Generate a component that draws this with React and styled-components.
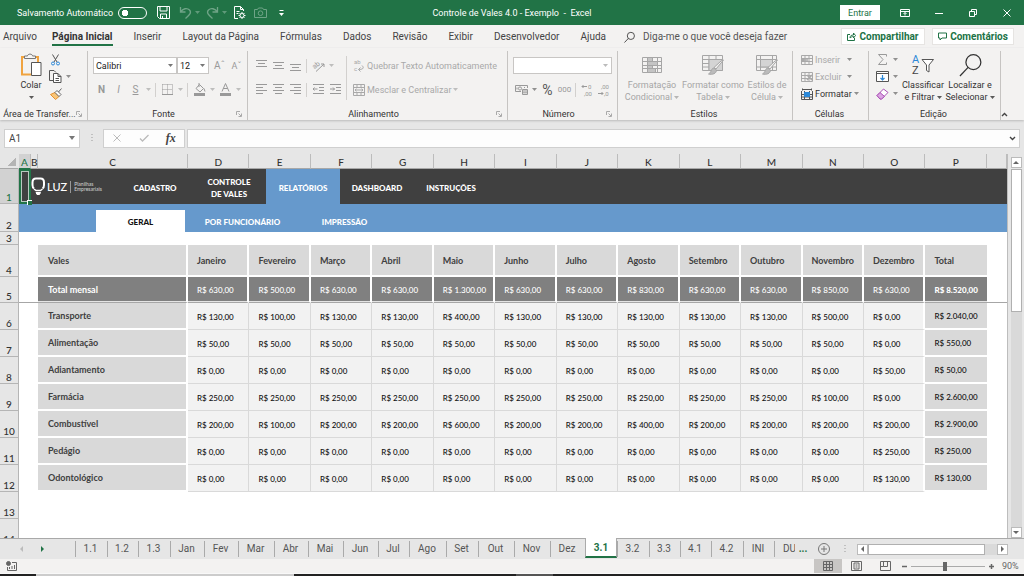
import React from "react";
import styled, { createGlobalStyle, css } from "styled-components";

const ui = '"Roboto", "Open Sans", "Noto Sans", sans-serif';
const cell = '"Lato", "Open Sans", sans-serif';

const Global = createGlobalStyle`
  *, *::before, *::after { box-sizing: border-box; }
  body { margin: 0; background: #e6e6e6; }
  button, input, select { font: inherit; color: inherit; margin: 0; }
  button { border: 0; background: none; padding: 0; cursor: default; }
`;

const Window = styled.div`
  display: flex;
  flex-direction: column;
  height: 100vh;
  overflow: hidden;
  font-family: ${ui};
  font-size: 9px;
  line-height: 12px;
  color: #444;
  background: #e6e6e6;
`;

/* ---------- title bar ---------- */
const TitleBar = styled.header`
  display: grid;
  grid-template-columns: 1fr auto 1fr;
  align-items: center;
  flex: none;
  height: 25px;
  background: #217346;
  color: #fff;
`;
const QuickAccess = styled.div`
  display: flex;
  align-items: center;
  padding-left: 17px;
`;
const AutoSave = styled.label`
  display: flex;
  align-items: center;
  gap: 5px;
  margin-right: 8px;
`;
const Toggle = styled.input`
  appearance: none;
  width: 29px;
  height: 12px;
  margin: 0;
  border: 1px solid #fff;
  border-radius: 6px;
  background: radial-gradient(circle at 6px 5px, #fff 3px, transparent 3px);
`;
const QuickButton = styled.button`
  display: grid;
  place-items: center;
  width: ${(p) => (p.$narrow ? 7 : 17)}px;
  margin-right: ${(p) => p.$gap || 0}px;
  height: 17px;
  opacity: ${(p) => (p.disabled ? 0.35 : 1)};
`;
const DocTitle = styled.h1`
  margin: 0;
  font-size: 9px;
  font-weight: 400;
  white-space: pre;
`;
const WindowControls = styled.div`
  display: flex;
  align-items: center;
  justify-content: flex-end;
`;
const SignIn = styled.button`
  width: 40px;
  height: 15px;
  margin-right: 8px;
  background: #fff;
  color: #217346;
`;
const WindowButton = styled.button`
  display: grid;
  place-items: center;
  width: 34px;
  height: 24px;
`;

/* ---------- ribbon tabs ---------- */
const TabStrip = styled.nav`
  display: flex;
  align-items: center;
  flex: none;
  height: 23px;
  padding: 0 10px 0 3px;
  background: #f3f2f1;
  font-size: 10px;
`;
const RibbonTabs = styled.div`
  display: flex;
  gap: 21px;
`;
const RibbonTab = styled.button`
  height: 19px;
  padding-top: 3px;
  border-bottom: 2px solid ${(p) => (p.$active ? "#217346" : "transparent")};
  font-weight: ${(p) => (p.$active ? 700 : 400)};
  color: ${(p) => (p.$active ? "#333" : "#444")};
  white-space: nowrap;
  &:first-child { margin-right: -6px; }
`;
const TellMe = styled.label`
  display: flex;
  align-items: center;
  flex: 1;
  gap: 8px;
  margin-left: 18px;
  padding-top: 1px;
`;
const TellMeInput = styled.input`
  flex: 1;
  min-width: 0;
  border: 0;
  padding: 0;
  background: none;
  &::placeholder { color: #555; opacity: 1; }
`;
const TopAction = styled.button`
  display: flex;
  align-items: center;
  justify-content: center;
  gap: 3px;
  width: ${(p) => p.$width}px;
  height: 17px;
  margin-left: 7px;
  border: 1px solid #e6e4e2;
  background: #fff;
  color: #217346;
  font-weight: 700;
`;

/* ---------- ribbon ---------- */
const Ribbon = styled.section`
  display: flex;
  flex: none;
  height: 72px;
  padding-top: 3px;
  background: #f3f2f1;
  box-shadow: 0 1px 2px #bbb;
  position: relative;
`;
const Group = styled.div`
  display: flex;
  flex-direction: column;
  flex: none;
  width: ${(p) => p.$width}px;
  border-right: 1px solid #c6c4c2;
`;
const GroupBody = styled.div`
  display: flex;
  flex: 1;
  padding-left: ${(p) => p.$left ?? 5}px;
`;
const GroupLabel = styled.div`
  display: flex;
  align-items: center;
  height: 12px;
  padding: 0 5px 0 3px;
  color: #333;
  span { flex: 1; text-align: center; white-space: nowrap; }
`;
const Rows = styled.div`
  display: flex;
  flex-direction: column;
  gap: ${(p) => (p.$dense ? 0 : 7)}px;
  padding-top: ${(p) => (p.$dense ? 0 : 6)}px;
`;
const Row = styled.div`
  display: flex;
  align-items: center;
  height: 17px;
`;
const Tool = styled.button`
  display: grid;
  place-items: center;
  flex: none;
  width: 17px;
  height: 17px;
  font-size: ${(p) => p.$size || 10}px;
  color: ${(p) => (p.$dim ? "#999" : "#555")};
`;
const CaretButton = styled.button`
  display: grid;
  place-items: center;
  flex: none;
  width: 9px;
  height: 17px;
  color: ${(p) => (p.$dim ? "#b0b0b0" : "#777")};
`;
const Divider = styled.span`
  flex: none;
  width: 1px;
  height: ${(p) => p.$height || 14}px;
  margin: ${(p) => p.$top || 0}px 3px 0 2px;
  background: #d2d0ce;
`;
const TextTool = styled.button`
  display: flex;
  align-items: center;
  height: 17px;
  min-width: 47px;
  color: ${(p) => (p.$dim ? "#a9a9a9" : "#333")};
  white-space: nowrap;
`;
const IconSlot = styled.span`
  display: grid;
  place-items: center;
  width: 17px;
  height: 17px;
`;
const BigTool = styled.button`
  display: flex;
  flex-direction: column;
  align-items: center;
  flex: none;
  width: ${(p) => p.$width}px;
  height: 54px;
  color: ${(p) => (p.$dim ? "#a6a6a6" : "#333")};
  white-space: nowrap;
`;
const BigIcon = styled.span`
  display: grid;
  place-items: center;
  height: 28px;
`;
const LabelLine = styled.span`
  display: flex;
  align-items: center;
  gap: 2px;
  height: 12px;
`;
const Picker = styled.select`
  appearance: none;
  width: ${(p) => p.$width}px;
  height: 17px;
  padding: 0 2px;
  border: 1px solid #c8c6c4;
  margin-right: ${(p) => p.$gap || 0}px;
  border-radius: 0;
  background: #fff url("data:image/svg+xml,%3Csvg xmlns='http://www.w3.org/2000/svg' width='5' height='3'%3E%3Cpath d='M0 0h5L2.500 3z' fill='${(p) => (p.$dim ? "%23bbb" : "%23777")}'/%3E%3C/svg%3E") no-repeat right 3px center;
  color: #222;
`;
const Collapse = styled.button`
  margin-left: auto;
  align-self: flex-end;
  width: 23px;
  height: 12px;
`;

/* ---------- formula bar ---------- */
const FormulaBar = styled.section`
  display: flex;
  align-items: center;
  flex: none;
  height: 34px;
  padding: 2px 4px 0;
  color: #444;
`;
const NameBox = styled.input`
  width: 76px;
  height: 19px;
  padding: 0 4px;
  border: 1px solid #cfcfcf;
  background: #fff url("data:image/svg+xml,%3Csvg xmlns='http://www.w3.org/2000/svg' width='6' height='4'%3E%3Cpath d='M0 0h6L3 4z' fill='%23777'/%3E%3C/svg%3E") no-repeat right 4px center;
  font-size: 10px;
`;
const Grip = styled.span`
  display: grid;
  place-items: center;
  width: ${(p) => p.$width}px;
`;
const FormulaButtons = styled.div`
  display: flex;
  align-items: center;
  width: 82px;
  height: 19px;
  border: 1px solid #cfcfcf;
  background: #fdfdfd;
  button { flex: 1; display: grid; place-items: center; }
`;
const Fx = styled.i`
  font-family: "Liberation Serif", serif;
  font-size: 12px;
  font-weight: 700;
`;
const FormulaField = styled.div`
  display: flex;
  align-items: center;
  flex: 1;
  height: 19px;
  margin-left: 2px;
  border: 1px solid #cfcfcf;
  background: #fdfdfd;
  input { flex: 1; min-width: 0; height: 100%; border: 0; background: none; }
  button { width: 13px; display: grid; place-items: center; }
`;

/* ---------- worksheet ---------- */
const SheetArea = styled.main`
  display: flex;
  flex: 1;
  min-height: 0;
`;
const SheetView = styled.div`
  flex: 1;
  min-width: 0;
  overflow: hidden;
  border-right: 1px solid #bdbdbd;
  background: #fff;
`;
const Sheet = styled.table`
  width: 100%;
  table-layout: fixed;
  border-collapse: separate;
  border-spacing: 0;
  font-family: ${cell};
  font-size: 8px;
  font-weight: 500;
  color: #111;
`;
const ColHead = styled.th`
  height: 15px;
  padding: 2px 0 0;
  background: #e6e6e6;
  border-right: 1px solid #bcbcbc;
  border-bottom: 1px solid #a8a8a8;
  font-size: 10px;
  line-height: 12px;
  font-weight: 500;
  color: #333;
  ${(p) => p.$selected && css`
    background: #d2d2d2;
    border-bottom-color: #217346;
    color: #217346;
  `}
  ${(p) => p.$corner && css`
    border-right-color: #e6e6e6;
    background: linear-gradient(135deg, #e6e6e6 50%, #b4b4b4 50%) no-repeat 8px 4px / 8px 8px, #e6e6e6;
  `}
`;
const RowHead = styled.th`
  height: ${(p) => p.$height}px;
  padding: 0;
  border-right: 1px solid #b5b5b5;
  border-bottom: 1px solid #b5b5b5;
  background: ${(p) => (p.$selected ? "#d2d2d2" : "#e6e6e6")};
  color: ${(p) => (p.$selected ? "#217346" : "#333")};
  font-size: 10px;
  font-weight: 500;
  line-height: 12px;
  vertical-align: bottom;
`;
const BlankCell = styled.td`
  padding: 0;
`;
const SelectedCell = styled.td`
  position: relative;
  z-index: 1;
  padding: 0;
  background: #404040;
  border: 2px solid #217346;
  box-shadow: inset 0 0 0 1px #b9c9c0;
  &::after {
    content: "";
    position: absolute;
    right: -3px;
    bottom: -3px;
    width: 5px;
    height: 5px;
    border: 1px solid #fff;
    border-width: 1px 0 0 1px;
    background: #217346;
  }
`;
const NavCell = styled.td`
  padding: 0;
  background: ${(p) => (p.$sub ? "#6699cc" : "#404040")};
  vertical-align: bottom;
`;
const SheetNav = styled.nav`
  display: flex;
  align-items: stretch;
  height: ${(p) => (p.$sub ? 22 : 35)}px;
  padding-left: ${(p) => (p.$sub ? 77 : 0)}px;
`;
const Brand = styled.div`
  display: flex;
  align-items: center;
  width: 87px;
  color: #fff;
`;
const BrandName = styled.span`
  margin: 0 3px 0 2px;
  font-size: 11px;
  font-weight: 500;
`;
const BrandTag = styled.small`
  padding: 1px 0 1px 3px;
  border-left: 1px solid #999;
  font-size: 5px;
  line-height: 5px;
  color: #ccc;
`;
const NavLink = styled.a`
  display: flex;
  align-items: center;
  justify-content: center;
  width: ${(p) => p.$width || 74}px;
  padding-top: 2px;
  background: ${(p) => p.$fill || "transparent"};
  color: ${(p) => (p.$fill === "#fff" ? "#111" : "#fff")};
  font-size: 8px;
  font-weight: 900;
  line-height: 12px;
  text-align: center;
  text-decoration: none;
`;
const LabelCell = styled.th`
  padding: 1px 0 0 10px;
  border-right: 2px solid #fff;
  border-bottom: 2px solid #fff;
  background: #d9d9d9;
  color: #404040;
  font-size: 9px;
  font-weight: 700;
  text-align: left;
`;
const MonthCell = styled(LabelCell)`
  padding-left: 9px;
  &:nth-last-child(2) { border-right: 0; }
`;
const totalRow = css`
  border-right: 2px solid #fff;
  border-bottom: 1px solid #a6a6a6;
  background: #808080;
  box-shadow: inset 0 -1px 0 #e4e4e4;
  color: #fff;
`;
const TotalCell = styled.td`
  ${totalRow}
  padding: 0 0 0 9px;
  font-weight: ${(p) => (p.$strong ? 900 : 500)};
  ${(p) => p.$strong && "border-right: 0;"}
`;
const TotalLabel = styled(LabelCell)`
  ${totalRow}
  padding-top: 0;
`;
const FreezeLine = styled.td`
  padding: 0;
  border-bottom: 1px solid #a6a6a6;
`;
const ValueCell = styled.td`
  padding: 1px 0 0 9px;
  border-right: ${(p) => (p.$last ? "2px solid #fff" : "1px solid #d9d9d9")};
  border-bottom: 1px solid #d9d9d9;
  background: #f2f2f2;
`;
const SumCell = styled.td`
  padding: 1px 0 0 9px;
  border-bottom: 2px solid #fff;
  background: #d9d9d9;
`;
const VScroll = styled.div`
  display: flex;
  flex-direction: column;
  align-items: center;
  flex: none;
  width: 16px;
  padding-top: 3px;
`;
const ScrollButton = styled.button`
  display: grid;
  place-items: center;
  flex: none;
  width: 11px;
  height: 11px;
  border: 1px solid #bbb;
  background: #fff;
  color: #666;
`;
const VTrack = styled.div`
  flex: 1;
  width: 11px;
  margin-top: 1px;
  background: #d9d9d9;
`;
const VThumb = styled.div`
  width: 11px;
  height: 40%;
  border: 1px solid #b0b0b0;
  background: #fff;
`;

/* ---------- sheet tabs ---------- */
const SheetTabs = styled.nav`
  display: flex;
  flex: none;
  height: 21px;
  border-top: 1px solid #a9a9a9;
  background: #e6e6e6;
  font-size: 10px;
  color: #555;
`;
const TabArrows = styled.div`
  display: flex;
  align-items: center;
  justify-content: space-between;
  width: 75px;
  padding: 0 29px 0 19px;
`;
const SheetTab = styled.button`
  flex: none;
  align-self: center;
  width: ${(p) => p.$width}px;
  height: 16px;
  padding-right: 2px;
  border-left: 1px solid #aaa;
  text-align: center;
  white-space: nowrap;
  overflow: hidden;
  ${(p) => p.$clipped && css`
    padding: 0 0 0 8px;
    text-align: left;
  `}
  ${(p) => p.$active && css`
    height: 20px;
    align-self: flex-start;
    margin-top: -1px;
    padding: 2px 0 0;
    border-right: 1px solid #aaa;
    border-bottom: 2px solid #217346;
    background: #fff;
    color: #217346;
    font-weight: 700;
  `}
`;
const MoreTabs = styled.span`
  width: 16px;
  align-self: center;
  text-align: center;
  color: #217346;
  font-weight: 700;
`;
const AddSheet = styled.button`
  display: grid;
  place-items: center;
  width: 26px;
  color: #777;
`;
const HScroll = styled.div`
  display: flex;
  align-items: center;
  flex: 1;
  padding: 0 16px 0 4px;
`;
const HTrack = styled.div`
  flex: 1;
  height: 11px;
  background: #dadada;
`;
const HThumb = styled.div`
  width: 91%;
  height: 11px;
  border: 1px solid #b0b0b0;
  background: #fff;
`;

/* ---------- status bar ---------- */
const StatusBar = styled.footer`
  display: flex;
  align-items: center;
  flex: none;
  height: 14px;
  padding-left: 6px;
  background: #f3f2f1;
  color: #666;
`;
const Views = styled.div`
  display: flex;
  margin-left: auto;
`;
const ViewButton = styled.button`
  display: grid;
  place-items: center;
  width: ${(p) => (p.$active ? 28 : 29)}px;
  height: 14px;
  background: ${(p) => (p.$active ? "#c8c6c4" : "transparent")};
`;
const Zoom = styled.div`
  display: flex;
  align-items: center;
  gap: 2px;
  width: 124px;
  button { width: 9px; height: 12px; display: grid; place-items: center; }
`;
const ZoomRange = styled.input`
  appearance: none;
  width: 74px;
  height: 12px;
  margin: 0;
  background: linear-gradient(#aaa, #aaa) no-repeat center / 100% 1px;
  &::-webkit-slider-thumb {
    appearance: none;
    width: 4px;
    height: 9px;
    background: #666;
  }
`;
const ZoomValue = styled.span`
  margin-left: 4px;
`;
const Taskbar = styled.div`
  flex: none;
  height: 3px;
  border-top: 1px solid #f8f8f8;
  background: linear-gradient(90deg, #222 0 3.5%, #ccc 3.5% 28.7%, #222 28.7% 50.4%, #555 50.4% 54%, #222 54%);
`;

/* ---------- icons ---------- */
const Drawing = styled.svg`
  display: block;
  overflow: visible;
`;
const Svg = ({ w = 14, h = w, vb, children, sw = 1 }) => (
  <Drawing width={w} height={h} viewBox={vb || `0 0 ${w} ${h}`} fill="none" stroke="currentColor" strokeWidth={sw} aria-hidden="true">
    {children}
  </Drawing>
);
const Caret = () => (
  <Svg w={5} h={3}><path d="M0 0h5L2.500 3z" fill="currentColor" stroke="none" opacity=".8" /></Svg>
);
const Tri = ({ dir }) => {
  const d = { up: "M0 4h6L3 1z", down: "M0 1h6L3 4z", left: "M4 0v6L1 3z", right: "M1 0v6l3-3z" }[dir];
  return <Svg w={6} h={6}><path d={d} fill="currentColor" stroke="none" /></Svg>;
};
const SaveIcon = () => (
  <Svg w={13}><path d="M.5.500h12v12H2.500l-2-2zM3 .500v4.500h7V.500M3.500 12.500V8h6v4.500M5.500 10v2.500" /></Svg>
);
const UndoIcon = ({ flip }) => (
  <Svg w={13} sw={1.300}>
    <g transform={flip ? "translate(13 0) scale(-1 1)" : undefined}>
      <path d="M1.500 1v5h5M1.500 6C4 2.500 8 1.500 10.500 4s0 5-4 8.500" />
    </g>
  </Svg>
);
const DocIcon = () => (
  <Svg w={12} h={13}>
    <path d="M9.500 5V3.500L6.500.500H.5v12H4M6.500.500v3h3M2.500 5.500h3M2.500 7.500h2" />
    <circle cx="8" cy="9.500" r="2" />
    <path d="M8 6v1.500M8 11.500V13M4.500 9.500H6M10 9.500h1.500M5.500 7l1 1M9.500 11l1 1M10.500 7l-1 1M6.500 11l-1 1" />
  </Svg>
);
const CameraIcon = () => (
  <Svg w={13} h={11}><path d="M.5 2.500h3l1-1.500h4l1 1.500h3v8H.5z" /><circle cx="6.500" cy="6.200" r="2.300" /></Svg>
);
const CustomizeIcon = () => (
  <Svg w={5} h={6}><path d="M.5.500h4" /><path d="M0 3h5L2.500 6z" fill="currentColor" stroke="none" /></Svg>
);
const RibbonOptionsIcon = () => (
  <Svg w={10} h={8}><path d="M.5.500h9v7h-9zM.5 2.500h9M5 6.500V3.500M3.500 5L5 3.500 6.500 5" /></Svg>
);
const RestoreIcon = () => (
  <Svg w={8}><path d="M.5 2.500h5v5h-5zM2.500 2V.500h5v5H6" /></Svg>
);
const CloseIcon = () => (
  <Svg w={8}><path d="M.5.500l7 7M7.500.500l-7 7" /></Svg>
);
const SearchIcon = ({ s = 11 }) => (
  <Svg w={s} vb="0 0 24 24" sw={s > 15 ? 1.300 : 2}><circle cx="15" cy="8.500" r="7.800" /><path d="M9.500 14L1 23" /></Svg>
);
const ShareIcon = () => (
  <Svg w={9}><path d="M3 2.500H.5v6h7V6M3 6c0-2 1-3 3.500-3V1l2 2.500-2 2.500V4.500C5 4.500 4 5 3 6z" /></Svg>
);
const CommentIcon = () => (
  <Svg w={9}><path d="M.5 1h8v5H4L2 8V6H.5z" /></Svg>
);
const PasteIcon = () => (
  <Svg w={22} h={24}>
    <path d="M5 4H2v17.500h9M15 4h3v5" stroke="#f0a33f" strokeWidth="2" />
    <path d="M4.500 5.500V3h3C7.500.500 12.500.500 12.500 3h3v2.500z" fill="#f6f6f6" stroke="#777" />
    <path d="M11.500 9.500h9.500v13h-9.500z" fill="#fff" stroke="#555" />
  </Svg>
);
const CutIcon = () => (
  <Svg w={9} h={12}><path d="M1.500.500L6 8M7.500.500L3 8" stroke="#555" /><circle cx="2" cy="9.500" r="1.500" stroke="#2b88d8" /><circle cx="7" cy="9.500" r="1.500" stroke="#2b88d8" /></Svg>
);
const CopyIcon = () => (
  <Svg w={13} h={13}><path d="M4 10.500H.5V.500H5L7 2.500" /><path d="M4.500 3.500H9l3 3v6H4.500zM9 3.500v3h3M6.500 8.500h3.500M6.500 10.500h3.500" fill="#fff" /></Svg>
);
const BrushIcon = () => (
  <Svg w={12} h={12}><path d="M.5 6.500L5 4.500l4 4-3.500 3z" fill="#f8c67a" stroke="#e8912d" /><path d="M5 4.500l2-2 4 4-2 2zM8.500 4L11.500.500" fill="#fff" stroke="#666" /></Svg>
);
const LinesIcon = ({ rows }) => (
  <Svg w={11} h={11}>{rows.map(([x, y, w]) => <path key={y} d={`M${x} ${y}.500h${w}`} />)}</Svg>
);
const OrientIcon = () => (
  <Svg w={14} h={13}>
    <text x="1" y="8" fontSize="7" fill="currentColor" stroke="none" transform="rotate(-40 5 7)">ab</text>
    <path d="M4 12.500L12 5M9 5h3v3" />
  </Svg>
);
const IndentIcon = ({ right }) => (
  <Svg w={11} h={11}><path d={`M0 .500h11M6 3.500h5M6 6.500h5M0 9.500h11M0 5h4.500${right ? "M3 3.500L4.500 5 3 6.500" : "M1.500 3.500L0 5l1.500 1.500"}`} /></Svg>
);
const BordersIcon = () => (
  <Svg w={11} h={11}><path d="M.5.500h10v10M.5.500v10M5.500.500v10M.5 5.500h10" strokeDasharray="1 1" /><path d="M0 10.500h11" /></Svg>
);
const FillIcon = () => (
  <Svg w={13} h={13}><path d="M3 5.500L6.500 1.500l4 4L7 9zM6 0v4M11 5.500l1 3" /><path d="M1 10h11v3H1z" fill="currentColor" stroke="none" /></Svg>
);
const FontColorIcon = () => (
  <Svg w={13} h={13}><path d="M3 8.500L6.500.500 10 8.500M4.300 5.500h4.400" /><path d="M1 10h11v3H1z" fill="currentColor" stroke="none" /></Svg>
);
const WrapIcon = () => (
  <Svg w={12} h={13}>
    <text x="1" y="5" fontSize="6" fill="currentColor" stroke="none">ab</text>
    <text x="1" y="12" fontSize="6" fill="currentColor" stroke="none">c</text>
    <path d="M9 6.500c3 3 0 4-3.500 4M7.500 8.500l-2 2 2 2" />
  </Svg>
);
const MergeIcon = () => (
  <Svg w={12} h={12}><path d="M.5.500h11v11H.5zM.5 3.500h11M.5 8.500h11M4 .500v3M8 .500v3M4 8.500v3M8 8.500v3M2 6h8M3.500 4.700L2 6l1.500 1.300M8.500 4.700L10 6 8.500 7.300" /></Svg>
);
const MoneyIcon = () => (
  <Svg w={13} h={11}><path d="M6 7.500H.5v-6h12V4" /><circle cx="5" cy="4.500" r="1.600" /><path d="M7.500 5.500h5v5h-5zM7.500 7h5M7.500 8.800h5M2 3.500v2M9.500 3v1" /></Svg>
);
const DecimalIcon = ({ less }) => (
  <Svg w={13} h={13}>
    <text x={less ? 3 : 7} y="6" fontSize="6" fill="currentColor" stroke="none">{less ? ",00" : "0"}</text>
    <text x={less ? 6 : 3} y="13" fontSize="6" fill="currentColor" stroke="none">{less ? ",0" : ",00"}</text>
    <path d={less ? "M0 10.500h5M3.500 9L5 10.500 3.500 12" : "M1 3.500h5M2.500 2L1 3.500 2.500 5"} />
  </Svg>
);
const CondIcon = () => (
  <Svg w={22} h={18}>
    <path d="M1.500 1.500h19v15h-19zM1.500 5.500h19M1.500 9.500h19M1.500 12.500h19M6.500 1.500v15M11.500 1.500v15M16.500 1.500v15" />
    <path d="M6.500 1.500h5v4h-5zM6.500 5.500h10v4h-10zM6.500 9.500h5v3h-5zM6.500 12.500h8v4h-8z" fill="#c4c4c4" />
  </Svg>
);
const TableStyleIcon = ({ cell: single }) => (
  <Svg w={24} h={22}>
    <path d={single ? "M1.500 1.500h20v15h-20zM1.500 5.500h20M5.500 1.500v15M17.500 1.500v15M1.500 13h20" : "M1.500 1.500h20v15h-20zM1.500 5.500h20M1.500 9.500h20M1.500 13h20M8 1.500v15M15 1.500v15"} />
    <path d={single ? "M5.500 5.500h12V13h-12z" : "M8 5.500h13.500v11H8z"} fill="#d4d4d4" />
    <path d="M22.500 6L15 15l-2-1.500L20 7z" fill="#f3f2f1" />
    <path d="M13 14c-3 0-2 4-5.500 6 4 1 8-.500 8-4z" fill="#bbb" />
  </Svg>
);
const CellsIcon = ({ kind }) => (
  <Svg w={12} h={12}>
    {kind === "format" ? (
      <>
        <path d="M.5 3v8.500h11V3M.5 6.500h11M.5 9h11M3.500 3v8.500M8.500 3v8.500M1.500.500v2M10.500.500v2M1.500 1.500h9" stroke="#555" />
        <path d="M3.500 4.500h5v4h-5z" fill="#2b88d8" stroke="#2b88d8" />
      </>
    ) : (
      <>
        <path d="M.5 1.500h11v9H.5zM.5 4.500h11M.5 7.500h11M4 1.500v9M8 1.500v9" />
        {kind === "insert" ? <path d="M1 6h6M3 4.500L1 6l2 1.500" strokeWidth="1.500" /> : <path d="M6 4l5 5M11 4L6 9" strokeWidth="1.500" />}
      </>
    )}
  </Svg>
);
const SigmaIcon = () => (
  <Svg w={11} h={11}><path d="M9.500 2.500V.500h-8L6 5.500l-4.500 5h8v-2" stroke="#999" /></Svg>
);
const FillDownIcon = () => (
  <Svg w={13} h={11}><path d="M.5.500h12v10H.5zM.5 2.500h12" fill="#fff" stroke="#555" /><path d="M6.500 4v5M4.500 7l2 2 2-2" stroke="#2b88d8" strokeWidth="1.200" /></Svg>
);
const EraserIcon = () => (
  <Svg w={13} h={12}><path d="M1 7.500L7.500 1 12 4.500 5.500 11H4z" fill="#fff" stroke="#a94fb5" /><path d="M1 7.500L4 4.500l4.500 4L5.500 11H4z" fill="#dba6e2" stroke="#a94fb5" /></Svg>
);
const SortFilterIcon = () => (
  <Svg w={24} h={22}>
    <text x="1" y="9" fontSize="11" fill="#2b88d8" stroke="none">A</text>
    <text x="1" y="20" fontSize="11" fill="#444" stroke="none">Z</text>
    <path d="M11 5.500h11.500L18 11v7l-2.500-1.500V11z" fill="#fff" stroke="#555" />
  </Svg>
);
const LauncherIcon = () => (
  <Svg w={6} h={6}><path d="M.5 4V.500H4M2.500 2.500L5 5M5.500 2.500v3h-3" stroke="#aaa" /></Svg>
);
const BulbIcon = () => (
  <Svg w={14} h={19} sw={2}>
    <path d="M3 11.500Q1.500 10.500 1.500 8V5.500Q1.500 1.500 5 1.500h4.500Q13 1.500 13 5.500V8q0 2.500-1.500 3.500" stroke="#fff" />
    <path d="M3 12l2 1.500h4.500l2-1.500" stroke="#fff" strokeWidth="1.500" />
    <path d="M5 15.500h4.500L8.500 17.500H6z" fill="#fff" stroke="#fff" strokeWidth="1" />
  </Svg>
);

/* ---------- data ---------- */
const ribbonTabs = ["Arquivo", "Página Inicial", "Inserir", "Layout da Página", "Fórmulas", "Dados", "Revisão", "Exibir", "Desenvolvedor", "Ajuda"];
const months = ["Janeiro", "Fevereiro", "Março", "Abril", "Maio", "Junho", "Julho", "Agosto", "Setembro", "Outubro", "Novembro", "Dezembro", "Total"];
const columns = "ABCDEFGHIJKLMNOP".split("");
const totals = ["630,00", "500,00", "630,00", "630,00", "1.300,00", "630,00", "630,00", "830,00", "630,00", "630,00", "850,00", "630,00", "8.520,00"];
const rows = [
  ["Transporte", "130,00", "100,00", "130,00", "130,00", "400,00", "130,00", "130,00", "130,00", "130,00", "130,00", "500,00", "0,00", "2.040,00"],
  ["Alimentação", "50,00", "50,00", "50,00", "50,00", "50,00", "50,00", "50,00", "50,00", "50,00", "50,00", "50,00", "0,00", "550,00"],
  ["Adiantamento", "0,00", "0,00", "0,00", "0,00", "0,00", "0,00", "0,00", "0,00", "0,00", "0,00", "0,00", "50,00", "50,00"],
  ["Farmácia", "250,00", "250,00", "250,00", "250,00", "250,00", "250,00", "250,00", "250,00", "250,00", "250,00", "100,00", "0,00", "2.600,00"],
  ["Combustível", "200,00", "100,00", "200,00", "200,00", "600,00", "200,00", "200,00", "400,00", "200,00", "200,00", "200,00", "200,00", "2.900,00"],
  ["Pedágio", "0,00", "0,00", "0,00", "0,00", "0,00", "0,00", "0,00", "0,00", "0,00", "0,00", "0,00", "250,00", "250,00"],
  ["Odontológico", "0,00", "0,00", "0,00", "0,00", "0,00", "0,00", "0,00", "0,00", "0,00", "0,00", "0,00", "130,00", "130,00"],
];
const sheetTabs = [
  ["1.1", 32], ["1.2", 31], ["1.3", 32], ["Jan", 34], ["Fev", 34], ["Mar", 36], ["Abr", 34], ["Mai", 35], ["Jun", 35], ["Jul", 31],
  ["Ago", 37], ["Set", 32], ["Out", 36], ["Nov", 36], ["Dez", 35], ["3.1", 32], ["3.2", 32], ["3.3", 31], ["4.1", 31], ["4.2", 32], ["INI", 31], ["DU", 21],
];

const RibbonGroup = ({ width, label, left, launcher, children }) => (
  <Group $width={width}>
    <GroupBody $left={left}>{children}</GroupBody>
    <GroupLabel><span>{label}</span>{launcher && <LauncherIcon />}</GroupLabel>
  </Group>
);
const DropCaret = ({ dim, label }) => <CaretButton $dim={dim} aria-label={label}><Caret /></CaretButton>;

export default function App() {
  return (
    <Window>
      <Global />
      <TitleBar>
        <QuickAccess>
          <AutoSave>Salvamento Automático<Toggle type="checkbox" role="switch" /></AutoSave>
          <QuickButton $gap={5} aria-label="Salvar"><SaveIcon /></QuickButton>
          <QuickButton disabled aria-label="Desfazer"><UndoIcon /></QuickButton>
          <QuickButton $narrow $gap={3} disabled aria-label="Opções de desfazer"><Caret /></QuickButton>
          <QuickButton disabled aria-label="Refazer"><UndoIcon flip /></QuickButton>
          <QuickButton $narrow $gap={3} disabled aria-label="Opções de refazer"><Caret /></QuickButton>
          <QuickButton $gap={4} aria-label="Visualizar impressão"><DocIcon /></QuickButton>
          <QuickButton $gap={9} disabled aria-label="Câmera"><CameraIcon /></QuickButton>
          <QuickButton $narrow aria-label="Personalizar"><CustomizeIcon /></QuickButton>
        </QuickAccess>
        <DocTitle>{"Controle de Vales 4.0 - Exemplo  -  Excel"}</DocTitle>
        <WindowControls>
          <SignIn>Entrar</SignIn>
          <WindowButton aria-label="Opções da faixa"><RibbonOptionsIcon /></WindowButton>
          <WindowButton aria-label="Minimizar"><Svg w={8}><path d="M0 4.500h8" /></Svg></WindowButton>
          <WindowButton aria-label="Restaurar"><RestoreIcon /></WindowButton>
          <WindowButton aria-label="Fechar"><CloseIcon /></WindowButton>
        </WindowControls>
      </TitleBar>

      <TabStrip>
        <RibbonTabs>
          {ribbonTabs.map((t) => <RibbonTab key={t} $active={t === "Página Inicial"}>{t}</RibbonTab>)}
        </RibbonTabs>
        <TellMe><SearchIcon /><TellMeInput aria-label="Pesquisar" placeholder="Diga-me o que você deseja fazer" /></TellMe>
        <TopAction $width={84}><ShareIcon />Compartilhar</TopAction>
        <TopAction $width={82}><CommentIcon />Comentários</TopAction>
      </TabStrip>

      <Ribbon>
        <RibbonGroup width={88} label="Área de Transfer..." left={15} launcher>
          <BigTool $width={32}>
            <BigIcon><PasteIcon /></BigIcon>
            <LabelLine>Colar</LabelLine>
            <LabelLine><Caret /></LabelLine>
          </BigTool>
          <Rows $dense>
            <Row><Tool aria-label="Recortar"><CutIcon /></Tool></Row>
            <Row><Tool aria-label="Copiar"><CopyIcon /></Tool><DropCaret label="Opções de copiar" /></Row>
            <Row><Tool aria-label="Pincel"><BrushIcon /></Tool></Row>
          </Rows>
        </RibbonGroup>

        <RibbonGroup width={160} label="Fonte" launcher>
          <Rows>
            <Row>
              <Picker $width={84} aria-label="Fonte"><option>Calibri</option></Picker>
              <Picker $width={32} $gap={2} aria-label="Tamanho"><option>12</option></Picker>
              <Tool $dim aria-label="Aumentar fonte"><span>Aˆ</span></Tool>
              <Tool $dim $size={9} aria-label="Diminuir fonte"><span>Aˇ</span></Tool>
            </Row>
            <Row>
              <Tool $dim><b>N</b></Tool>
              <Tool $dim><i>I</i></Tool>
              <Tool $dim><u>S</u></Tool>
              <DropCaret dim label="Sublinhado" />
              <Divider />
              <Tool $dim aria-label="Bordas"><BordersIcon /></Tool>
              <DropCaret dim label="Opções de bordas" />
              <Divider />
              <Tool $dim aria-label="Preenchimento"><FillIcon /></Tool>
              <DropCaret dim label="Cores de preenchimento" />
              <Tool $dim aria-label="Cor da fonte"><FontColorIcon /></Tool>
              <DropCaret dim label="Cores da fonte" />
            </Row>
          </Rows>
        </RibbonGroup>

        <RibbonGroup width={260} label="Alinhamento" launcher>
          <Rows>
            <Row>
              <Tool $dim aria-label="Alinhar acima"><LinesIcon rows={[[0, 0, 11], [2, 3, 7], [0, 6, 11]]} /></Tool>
              <Tool $dim aria-label="Alinhar no meio"><LinesIcon rows={[[0, 2, 11], [2, 5, 7], [0, 8, 11]]} /></Tool>
              <Tool $dim aria-label="Alinhar abaixo"><LinesIcon rows={[[0, 4, 11], [2, 7, 7], [0, 10, 11]]} /></Tool>
              <Divider />
              <Tool $dim aria-label="Orientação"><OrientIcon /></Tool>
              <DropCaret dim label="Opções de orientação" />
            </Row>
            <Row>
              <Tool $dim aria-label="Alinhar à esquerda"><LinesIcon rows={[[0, 0, 11], [0, 3, 7], [0, 6, 11], [0, 9, 7]]} /></Tool>
              <Tool $dim aria-label="Centralizar"><LinesIcon rows={[[0, 0, 11], [2, 3, 7], [0, 6, 11], [2, 9, 7]]} /></Tool>
              <Tool $dim aria-label="Alinhar à direita"><LinesIcon rows={[[0, 0, 11], [4, 3, 7], [0, 6, 11], [4, 9, 7]]} /></Tool>
              <Divider />
              <Tool $dim aria-label="Diminuir recuo"><IndentIcon /></Tool>
              <Tool $dim aria-label="Aumentar recuo"><IndentIcon right /></Tool>
            </Row>
          </Rows>
          <Divider $height={44} $top={5} />
          <Rows>
            <TextTool $dim><IconSlot><WrapIcon /></IconSlot>Quebrar Texto Automaticamente</TextTool>
            <Row>
              <TextTool $dim><IconSlot><MergeIcon /></IconSlot>Mesclar e Centralizar</TextTool>
              <DropCaret dim label="Opções de mesclar" />
            </Row>
          </Rows>
        </RibbonGroup>

        <RibbonGroup width={110} label="Número" launcher>
          <Rows>
            <Picker $width={99} $dim aria-label="Formato de número"><option> </option></Picker>
            <Row>
              <Tool $dim aria-label="Contábil"><MoneyIcon /></Tool>
              <DropCaret label="Formatos contábeis" />
              <Tool $size={14}>%</Tool>
              <Tool $dim $size={8}>000</Tool>
              <Divider />
              <Tool $dim aria-label="Aumentar casas decimais"><DecimalIcon /></Tool>
              <Tool $dim aria-label="Diminuir casas decimais"><DecimalIcon less /></Tool>
            </Row>
          </Rows>
        </RibbonGroup>

        <RibbonGroup width={175} label="Estilos" left={4}>
          <BigTool $width={60} $dim>
            <BigIcon><CondIcon /></BigIcon>
            <LabelLine>Formatação</LabelLine><LabelLine>Condicional<Caret /></LabelLine>
          </BigTool>
          <BigTool $width={62} $dim>
            <BigIcon><TableStyleIcon /></BigIcon>
            <LabelLine>Formatar como</LabelLine><LabelLine>Tabela<Caret /></LabelLine>
          </BigTool>
          <BigTool $width={46} $dim>
            <BigIcon><TableStyleIcon cell /></BigIcon>
            <LabelLine>Estilos de</LabelLine><LabelLine>Célula<Caret /></LabelLine>
          </BigTool>
        </RibbonGroup>

        <RibbonGroup width={76} label="Células">
          <Rows $dense>
            <Row><TextTool $dim><IconSlot><CellsIcon kind="insert" /></IconSlot>Inserir</TextTool><DropCaret label="Opções de inserir" /></Row>
            <Row><TextTool $dim><IconSlot><CellsIcon kind="delete" /></IconSlot>Excluir</TextTool><DropCaret label="Opções de excluir" /></Row>
            <Row><TextTool><IconSlot><CellsIcon kind="format" /></IconSlot>Formatar</TextTool><DropCaret label="Opções de formatar" /></Row>
          </Rows>
        </RibbonGroup>

        <RibbonGroup width={132} label="Edição">
          <Rows $dense>
            <Row><Tool aria-label="Soma"><SigmaIcon /></Tool><DropCaret label="Funções" /></Row>
            <Row><Tool aria-label="Preencher"><FillDownIcon /></Tool><DropCaret label="Opções de preencher" /></Row>
            <Row><Tool aria-label="Limpar"><EraserIcon /></Tool><DropCaret label="Opções de limpar" /></Row>
          </Rows>
          <BigTool $width={46}>
            <BigIcon><SortFilterIcon /></BigIcon>
            <LabelLine>Classificar</LabelLine><LabelLine>e Filtrar<Caret /></LabelLine>
          </BigTool>
          <BigTool $width={48}>
            <BigIcon><SearchIcon s={23} /></BigIcon>
            <LabelLine>Localizar e</LabelLine><LabelLine>Selecionar<Caret /></LabelLine>
          </BigTool>
        </RibbonGroup>
        <Collapse aria-label="Recolher faixa"><Svg w={7} h={5}><path d="M1 4l2.500-2.500L6 4" strokeWidth="1.400" /></Svg></Collapse>
      </Ribbon>

      <FormulaBar>
        <NameBox aria-label="Caixa de nome" defaultValue="A1" />
        <Grip $width={23}><Svg w={2} h={9}><path d="M1 0v9" strokeDasharray="1 2" stroke="#999" /></Svg></Grip>
        <FormulaButtons>
          <button aria-label="Cancelar"><Svg w={8}><path d="M.5.500l7 7M7.500.500l-7 7" stroke="#bbb" /></Svg></button>
          <button aria-label="Inserir"><Svg w={10} h={8}><path d="M1 4.500L3.500 7 9.500 1" stroke="#bbb" strokeWidth="1.300" /></Svg></button>
          <button aria-label="Inserir função"><Fx>fx</Fx></button>
        </FormulaButtons>
        <FormulaField>
          <input aria-label="Barra de fórmulas" />
          <button aria-label="Expandir"><Svg w={7} h={5}><path d="M1 1l2.500 2.500L6 1" strokeWidth="1.400" /></Svg></button>
        </FormulaField>
      </FormulaBar>

      <SheetArea>
        <SheetView>
          <Sheet>
            <colgroup>
              <col width="19" /><col width="12" /><col width="7" /><col width="150" />
              {months.map((m) => <col key={m} />)}
              <col width="20" />
            </colgroup>
            <thead>
              <tr>
                <ColHead $corner />
                {columns.map((c) => <ColHead key={c} scope="col" $selected={c === "A"}>{c}</ColHead>)}
                <ColHead />
              </tr>
            </thead>
            <tbody>
              <tr>
                <RowHead $height={35} $selected>1</RowHead>
                <SelectedCell />
                <NavCell colSpan={16}>
                  <SheetNav>
                    <Brand><BulbIcon /><BrandName>LUZ</BrandName><BrandTag>Planilhas<br />Empresariais</BrandTag></Brand>
                    <NavLink href="#cadastro">CADASTRO</NavLink>
                    <NavLink href="#controle">CONTROLE<br />DE VALES</NavLink>
                    <NavLink href="#relatorios" $fill="#6699cc">RELATÓRIOS</NavLink>
                    <NavLink href="#dashboard">DASHBOARD</NavLink>
                    <NavLink href="#instrucoes">INSTRUÇÕES</NavLink>
                  </SheetNav>
                </NavCell>
              </tr>
              <tr>
                <RowHead $height={28}>2</RowHead>
                <NavCell $sub colSpan={17}>
                  <SheetNav $sub>
                    <NavLink href="#geral" $width={89} $fill="#fff">GERAL</NavLink>
                    <NavLink href="#funcionario" $width={115}>POR FUNCIONÁRIO</NavLink>
                    <NavLink href="#impressao" $width={89}>IMPRESSÃO</NavLink>
                  </SheetNav>
                </NavCell>
              </tr>
              <tr><RowHead $height={13}>3</RowHead><BlankCell colSpan={17} /></tr>
              <tr>
                <RowHead $height={32}>4</RowHead><BlankCell /><BlankCell />
                <LabelCell scope="col">Vales</LabelCell>
                {months.map((m) => <MonthCell key={m} scope="col">{m}</MonthCell>)}
                <BlankCell />
              </tr>
              <tr>
                <RowHead $height={26}>5</RowHead><FreezeLine /><FreezeLine />
                <TotalLabel scope="row">Total mensal</TotalLabel>
                {totals.map((v, i) => <TotalCell key={months[i]} $strong={i === 12}>R$ {v}</TotalCell>)}
                <FreezeLine />
              </tr>
              {rows.map(([name, ...vals], r) => (
                <tr key={name}>
                  <RowHead $height={27}>{r + 6}</RowHead><BlankCell /><BlankCell />
                  <LabelCell scope="row">{name}</LabelCell>
                  {vals.map((v, i) => i === 12
                    ? <SumCell key={i}>R$ {v}</SumCell>
                    : <ValueCell key={i} $last={i === 11}>R$ {v}</ValueCell>)}
                  <BlankCell />
                </tr>
              ))}
              <tr><RowHead $height={27}>13</RowHead><BlankCell colSpan={17} /></tr>
              <tr><RowHead $height={27}>14</RowHead><BlankCell colSpan={17} /></tr>
            </tbody>
          </Sheet>
        </SheetView>
        <VScroll>
          <ScrollButton aria-label="Rolar para cima"><Tri dir="up" /></ScrollButton>
          <VTrack><VThumb /></VTrack>
          <ScrollButton aria-label="Rolar para baixo"><Tri dir="down" /></ScrollButton>
        </VScroll>
      </SheetArea>

      <SheetTabs>
        <TabArrows>
          <Svg w={6}><path d="M4 0v6L1 3z" fill="#bbb" stroke="none" /></Svg>
          <Svg w={6}><path d="M1 0v6l3-3z" fill="#217346" stroke="none" /></Svg>
        </TabArrows>
        {sheetTabs.map(([name, w]) => (
          <SheetTab key={name} $width={w} $active={name === "3.1"} $clipped={name === "DU"}>{name}</SheetTab>
        ))}
        <MoreTabs>...</MoreTabs>
        <AddSheet aria-label="Nova planilha"><Svg w={12}><circle cx="6" cy="6" r="5.500" /><path d="M6 3v6M3 6h6" /></Svg></AddSheet>
        <Grip $width={16}><Svg w={2} h={9}><path d="M1 0v9" strokeDasharray="1 2" stroke="#999" /></Svg></Grip>
        <HScroll>
          <ScrollButton aria-label="Rolar para a esquerda"><Tri dir="left" /></ScrollButton>
          <HTrack><HThumb /></HTrack>
          <ScrollButton aria-label="Rolar para a direita"><Tri dir="right" /></ScrollButton>
        </HScroll>
      </SheetTabs>

      <StatusBar>
        <Svg w={11} h={10}><circle cx="2.500" cy="2.500" r="2" fill="currentColor" /><path d="M6 1.500h4.500v8h-9V6M3.500 6v2M6 5v3M8.500 4v4" /></Svg>
        <Views>
          <ViewButton $active aria-label="Normal"><Svg w={10}><path d="M.5.500h9v9h-9zM.5 3.500h9M.5 6.500h9M3.500.500v9M6.500.500v9" /></Svg></ViewButton>
          <ViewButton aria-label="Layout da página"><Svg w={11} h={10}><path d="M.5.500h10v9H.5zM3 2h5v6H3zM4.500 4h2M4.500 6h2" /></Svg></ViewButton>
          <ViewButton aria-label="Quebra de página"><Svg w={11} h={10}><path d="M.5.500h10v9H.5zM3.500.500v5h4v-5M.5 5.500h3" /></Svg></ViewButton>
        </Views>
        <Zoom>
          <button aria-label="Reduzir"><Svg w={5}><path d="M0 2.500h5" strokeWidth="1.500" /></Svg></button>
          <ZoomRange type="range" min="0" max="100" defaultValue="45" aria-label="Zoom" />
          <button aria-label="Ampliar"><Svg w={5}><path d="M0 2.500h5M2.500 0v5" strokeWidth="1.500" /></Svg></button>
          <ZoomValue>90%</ZoomValue>
        </Zoom>
      </StatusBar>
      <Taskbar />
    </Window>
  );
}
